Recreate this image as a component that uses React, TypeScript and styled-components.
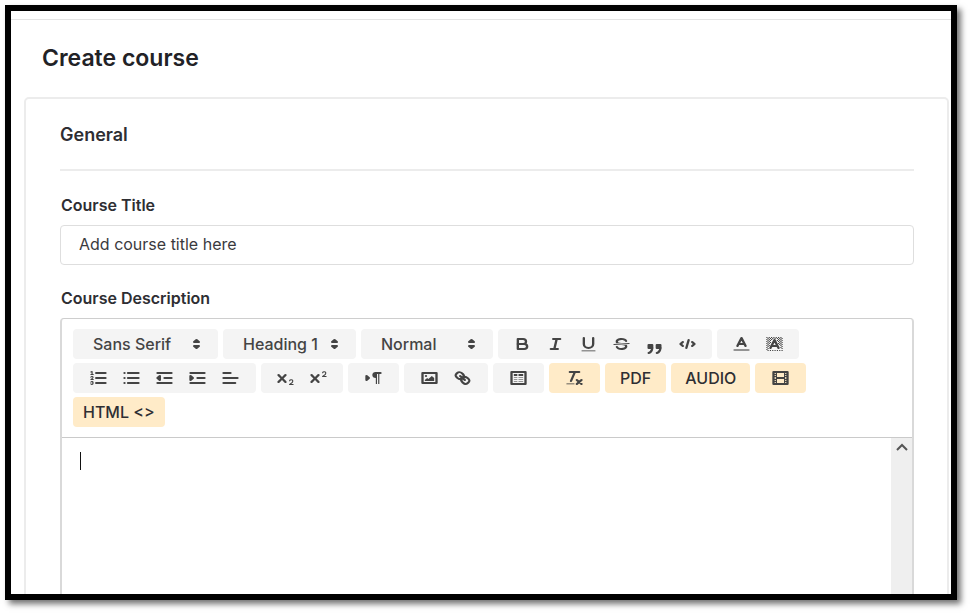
import React from "react";
import styled, { createGlobalStyle } from "styled-components";

const GlobalStyle = createGlobalStyle`
  *, *::before, *::after { box-sizing: border-box; }
  body {
    margin: 0;
    background: #fff;
    color: #2e2e33;
    font-family: Inter, "Liberation Sans", sans-serif;
    font-size: 16px;
  }
  button, input, select, textarea { font: inherit; color: inherit; margin: 0; }
`;

const Page = styled.div`
  height: 100vh;
  padding: 5px 13px 13px 5px;
`;

const Frame = styled.div`
  height: 100%;
  overflow: hidden;
  border: 6px solid #000;
  box-shadow: 4px 4px 6px rgba(0, 0, 0, 0.55);
`;

const TopRule = styled.div`
  height: 9px;
  border-bottom: 1px solid #e4e4e4;
`;

const PageTitle = styled.h1`
  margin: 0;
  padding: 23px 31px;
  font-size: 23px;
  line-height: 31px;
  font-weight: 600;
  color: #222226;
`;

const Card = styled.main`
  margin: 0 2px 0 13px;
  padding: 24px 33px 0 34px;
  border: 2px solid #ececec;
  border-radius: 5px;
`;

const SectionTitle = styled.h2`
  margin: 0 0 27px;
  padding-bottom: 22px;
  border-bottom: 2px solid #ececec;
  font-size: 18px;
  line-height: 24px;
  font-weight: 600;
`;

const Label = styled.label`
  display: block;
  margin-bottom: 13px;
  padding-left: 1px;
  font-size: 16px;
  line-height: 14px;
  font-weight: 600;
`;

const TitleInput = styled.input`
  display: block;
  width: 100%;
  height: 40px;
  margin-bottom: 26px;
  padding: 0 18px 2px;
  border: 1px solid #dedede;
  border-radius: 4px;
  background: #fff;
  outline: none;
  &::placeholder { color: #3a3a3e; opacity: 1; }
`;

const Editor = styled.section`
  border: 2px solid #d9d9d9;
  border-top: 1px solid #cecece;
  border-radius: 4px 4px 0 0;
`;

const Toolbar = styled.div`
  display: flex;
  flex-wrap: wrap;
  gap: 4px 5px;
  padding: 10px 100px 10px 11px;
  border-bottom: 1px solid #cacaca;
`;

const Group = styled.div<{ $pad?: number }>`
  display: flex;
  height: 30px;
  padding: 0 ${(p) => p.$pad ?? 9}px;
  border-radius: 4px;
  background: #f4f4f4;
`;

const ToolButton = styled.button`
  display: grid;
  place-items: center;
  width: 33px;
  height: 30px;
  padding: 0;
  border: 0;
  background: none;
`;

const AccentButton = styled.button<{ $pad: number }>`
  display: grid;
  place-items: center;
  height: 30px;
  padding: 0 ${(p) => p.$pad}px;
  border: 0;
  border-radius: 4px;
  background: #ffebc8;
  font-weight: 500;
`;

const Picker = styled.div<{ $width: number }>`
  display: grid;
  align-items: center;
  width: ${(p) => p.$width}px;
  height: 30px;
  border-radius: 4px;
  background: #f4f4f4;
  > * { grid-area: 1 / 1; }
  > svg { justify-self: end; margin-right: 11px; pointer-events: none; }
`;

const PickerSelect = styled.select`
  appearance: none;
  width: 100%;
  height: 30px;
  padding: 0 30px 0 20px;
  border: 0;
  background: none;
  font-weight: 500;
  color: #444;
`;

const Body = styled.div`
  display: flex;
  height: 300px;
`;

const Writing = styled.div`
  position: relative;
  flex: 1;
`;

const TextArea = styled.textarea`
  display: block;
  width: 100%;
  height: 100%;
  padding: 13px 18px;
  border: 0;
  outline: none;
  resize: none;
  overflow: hidden;
  background: #fff;
`;

const Caret = styled.span`
  position: absolute;
  top: 14px;
  left: 18px;
  width: 1px;
  height: 18px;
  background: #111;
`;

const ScrollTrack = styled.div`
  width: 21px;
  background: #efefef;
`;

const ScrollUp = styled.button`
  display: grid;
  place-items: center;
  width: 100%;
  height: 18px;
  padding: 0;
  border: 0;
  background: none;
`;

const Glyph = styled.svg`
  display: block;
  width: 21px;
  height: 18px;
  overflow: visible;
  fill: none;
  stroke: #444;
  stroke-width: 2;
  stroke-linecap: round;
  stroke-linejoin: round;
  .thin { stroke-width: 1; }
  .fill { fill: #444; stroke: none; }
  .solid { fill: #444; }
  .soft { opacity: 0.55; }
`;

const TWO =
  "M15.5,15H13.861a3.858,3.858,0,0,0,1.914-2.975,1.8,1.8,0,0,0-1.6-1.751A1.921,1.921,0,0,0,12.021,11.7a0.5,0.5,0,1,0,.957.291h0a0.914,0.914,0,0,1,1.053-.725,0.81,0.81,0,0,1,.744.762c0,1.076-1.17,1.87-1.94,2.431A1.456,1.456,0,0,0,12,15.5a0.5,0.5,0,0,0,.5.5h3A0.5,0.5,0,0,0,15.5,15Z";
const CROSS =
  "M9.65,5.241a1,1,0,0,0-1.409.108L6,7.964,3.759,5.349A1,1,0,0,0,2.192,6.592Q2.215,6.621,2.241,6.649L4.684,9.5,2.241,12.35A1,1,0,0,0,3.71,13.707q0.026-.028.049-0.057L6,11.036,8.241,13.65a1,1,0,1,0,1.567-1.243Q9.785,12.378,9.759,12.35L7.316,9.5,9.759,6.651A1,1,0,0,0,9.65,5.241Z";

const dots: [number, number][] = [];
for (let y = 2; y < 16; y += 1) {
  for (let x = 2; x < 16; x += 1) {
    const nearLetter = y > 3 && y < 15 && Math.abs(x - 8.5) < 1.5 + (y - 3) * 0.38;
    if ((x + y) % 2 === 0 && !nearLetter) dots.push([x, y]);
  }
}

const icons: Record<string, React.ReactNode> = {
  bold: (
    <>
      <path d="M5,4H9.5A2.5,2.5,0,0,1,9.5,9H5Z" />
      <path d="M5,9h5.5A2.5,2.5,0,0,1,10.5,14H5Z" />
    </>
  ),
  italic: <path d="M7 4H13M5 14H11M8 14L10 4" />,
  underline: (
    <>
      <path d="M5,3V9a4,4,0,0,0,8,0V3" />
      <rect className="fill soft" height="1.4" width="12" x="3" y="15" rx="0.5" />
    </>
  ),
  strike: (
    <>
      <path className="thin" d="M15.5 8.5L2.5 9.5" />
      <path
        className="fill"
        d="M9.007,8C6.542,7.791,6,7.519,6,6.5,6,5.792,7.283,5,9,5c1.571,0,2.765.679,2.969,1.309a1,1,0,0,0,1.9-.617C13.356,4.106,11.354,3,9,3,6.2,3,4,4.538,4,6.5a3.2,3.2,0,0,0,.5,1.843Z"
      />
      <path
        className="fill"
        d="M8.984,10C11.457,10.208,12,10.479,12,11.5c0,0.708-1.283,1.5-3,1.5-1.571,0-2.765-.679-2.969-1.309a1,1,0,1,0-1.9.617C4.644,13.894,6.646,15,9,15c2.8,0,5-1.538,5-3.5a3.2,3.2,0,0,0-.5-1.843Z"
      />
    </>
  ),
  quote: (
    <g transform="translate(0 5)">
      <rect className="solid" height="3" width="3" x="4" y="5" />
      <rect className="solid" height="3" width="3" x="11" y="5" />
      <path className="solid" d="M7,8c0,4.031-3,5-3,5M14,8c0,4.031-3,5-3,5" />
    </g>
  ),
  code: <path d="M5 7L3 9L5 11M13 7L15 9L13 11M10 5L8 13" />,
  color: (
    <>
      <path className="soft" d="M3 15H15" />
      <path d="M5.5 11L9 3L12.5 11M11.63 9H6.38" />
    </>
  ),
  background: (
    <>
      {dots.map(([x, y]) => (
        <rect key={`${x}-${y}`} className="fill" x={x} y={y} width="1" height="1" />
      ))}
      <path d="M5.5 13L9 5L12.5 13M11.63 11H6.38" />
    </>
  ),
  ordered: (
    <>
      <path d="M7 4H15M7 9H15M7 14H15" />
      <path
        className="thin"
        d="M2.5 5.5H4.5M3.5 5.5V2.5L2.5 3M4.5,10.5h-2c0-.234,1.85-1.076,1.85-2.234A0.959,0.959,0,0,0,2.5,8.156M2.5,14.846a0.959,0.959,0,0,0,1.85-.109A0.7,0.7,0,0,0,3.75,14a0.688,0.688,0,0,0,.6-0.736,0.959,0.959,0,0,0-1.85-.109"
      />
    </>
  ),
  bullet: <path d="M6 4H15M6 9H15M6 14H15M3 4H3.01M3 9H3.01M3 14H3.01" />,
  outdent: (
    <>
      <path d="M3 14H15M3 4H15M9 9H15" />
      <path className="solid" d="M5 7V11L3 9Z" />
    </>
  ),
  indent: (
    <>
      <path d="M3 14H15M3 4H15M9 9H15" />
      <path className="solid" d="M3 7V11L5 9Z" />
    </>
  ),
  align: <path d="M3 9H15M3 14H13M3 4H9" />,
  sub: (
    <>
      <path className="fill" d={TWO} />
      <path className="fill" d={CROSS} />
    </>
  ),
  sup: (
    <>
      <path className="fill" d={TWO} transform="translate(0 -8)" />
      <path className="fill" d={CROSS} />
    </>
  ),
  direction: (
    <>
      <path className="solid" d="M3 11L5 9L3 7Z" />
      <path d="M15 4H11" />
      <path className="fill" d="M11,3a3,3,0,0,0,0,6h1V3Z" />
      <path className="fill" d="M11 4h1v11h-1zM13 4h1v11h-1z" />
    </>
  ),
  image: (
    <>
      <rect height="10" width="12" x="3" y="4" />
      <circle className="fill" cx="6" cy="7" r="1" />
      <path className="fill" d="M5 12V11L7 9L8 10L11 7L13 9V12Z" />
    </>
  ),
  link: (
    <>
      <path d="M7 7L11 11" />
      <path d="M8.9,4.577a3.476,3.476,0,0,1,.36,4.679A3.476,3.476,0,0,1,4.577,8.9C3.185,7.5,2.035,6.4,4.217,4.217S7.5,3.185,8.9,4.577Z" />
      <path d="M13.423,9.1a3.476,3.476,0,0,0-4.679-.36,3.476,3.476,0,0,0,.36,4.679c1.392,1.392,2.5,2.542,4.679.36S14.815,10.5,13.423,9.1Z" />
    </>
  ),
  table: (
    <>
      <rect height="12" width="12" x="3" y="3" />
      <path className="fill" d="M5 5h3v2h-3zM9 5h4v2h-4z" />
      <path className="fill soft" d="M5 8h3v1h-3zM9 8h4v1h-4zM5 10h3v1h-3zM9 10h4v1h-4zM5 12h3v1h-3zM9 12h4v1h-4z" />
    </>
  ),
  clean: (
    <>
      <path d="M5 3H13M6 12L9.35 3M11 11L15 15M15 11L11 15" />
      <rect className="fill soft" height="1.4" rx="0.5" width="7" x="2" y="14" />
    </>
  ),
  video: (
    <>
      <rect height="12" width="12" x="3" y="3" />
      <path
        className="fill"
        d="M5 3h1v12h-1zM12 3h1v12h-1zM5 8h8v2h-8zM3 5h3v1h-3zM3 7h3v1h-3zM3 10h3v1h-3zM3 12h3v1h-3zM12 5h3v1h-3zM12 7h3v1h-3zM12 10h3v1h-3zM12 12h3v1h-3z"
      />
    </>
  ),
  updown: <path className="solid" d="M7 11L9 13L11 11ZM7 7L9 5L11 7Z" />,
};

const Icon = ({ name }: { name: string }) => (
  <Glyph viewBox="0 0 18 18" preserveAspectRatio="none" aria-hidden="true">
    {icons[name]}
  </Glyph>
);

const Tools = ({ names, pad }: { names: string[]; pad?: number }) => (
  <Group $pad={pad}>
    {names.map((name) => (
      <ToolButton key={name} type="button" aria-label={name}>
        <Icon name={name} />
      </ToolButton>
    ))}
  </Group>
);

const Choice = ({ label, value, width }: { label: string; value: string; width: number }) => (
  <Picker $width={width}>
    <PickerSelect aria-label={label} defaultValue={value}>
      <option>{value}</option>
    </PickerSelect>
    <Icon name="updown" />
  </Picker>
);

export default function App() {
  return (
    <Page>
      <GlobalStyle />
      <Frame>
        <TopRule />
        <PageTitle>Create course</PageTitle>
        <Card>
          <SectionTitle>General</SectionTitle>
          <Label htmlFor="title">Course Title</Label>
          <TitleInput id="title" type="text" placeholder="Add course title here" />
          <Label htmlFor="description">Course Description</Label>
          <Editor>
            <Toolbar>
              <Choice label="Font" value="Sans Serif" width={145} />
              <Choice label="Heading" value="Heading 1" width={133} />
              <Choice label="Size" value="Normal" width={132} />
              <Tools names={["bold", "italic", "underline", "strike", "quote", "code"]} pad={8} />
              <Tools names={["color", "background"]} pad={8} />
              <Tools names={["ordered", "bullet", "outdent", "indent", "align"]} />
              <Tools names={["sub", "sup"]} pad={8} />
              <Tools names={["direction"]} />
              <Tools names={["image", "link"]} />
              <Tools names={["table"]} />
              <AccentButton type="button" aria-label="Clear formatting" $pad={15}>
                <Icon name="clean" />
              </AccentButton>
              <AccentButton type="button" $pad={15}>PDF</AccentButton>
              <AccentButton type="button" $pad={14}>AUDIO</AccentButton>
              <AccentButton type="button" aria-label="Video" $pad={15}>
                <Icon name="video" />
              </AccentButton>
              <AccentButton type="button" $pad={10}>HTML &lt;&gt;</AccentButton>
            </Toolbar>
            <Body>
              <Writing>
                <TextArea id="description" />
                <Caret />
              </Writing>
              <ScrollTrack>
                <ScrollUp type="button" aria-label="Scroll up">
                  <svg width="12" height="8" viewBox="0 0 12 8" fill="none" stroke="#555" strokeWidth="2">
                    <path d="M1 7L6 2L11 7" />
                  </svg>
                </ScrollUp>
              </ScrollTrack>
            </Body>
          </Editor>
        </Card>
      </Frame>
    </Page>
  );
}
